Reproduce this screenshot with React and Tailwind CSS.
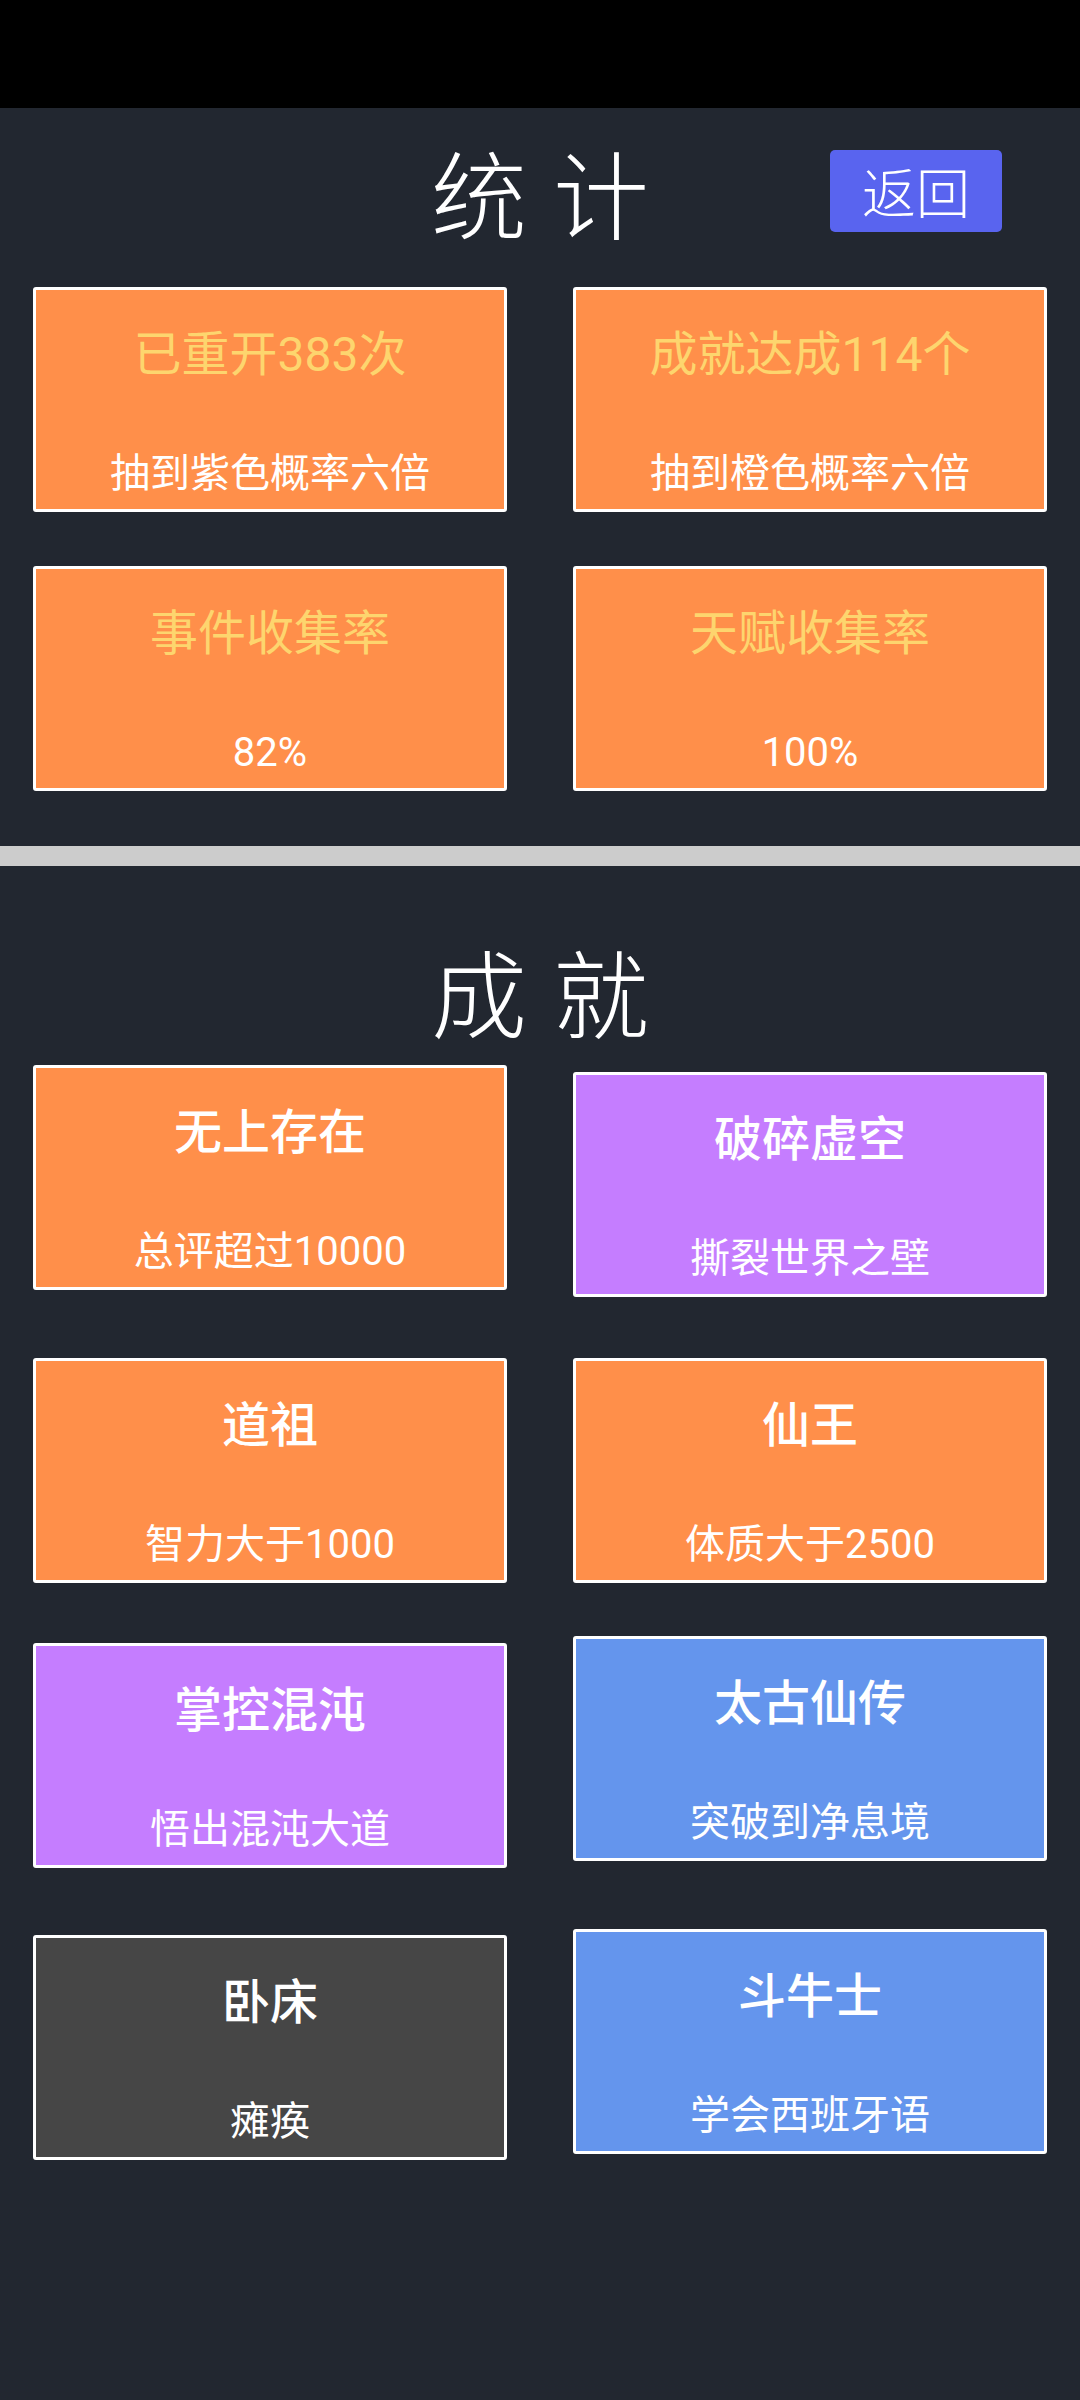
const stats = [
  { title: "已重开383次", sub: "抽到紫色概率六倍" },
  { title: "成就达成114个", sub: "抽到橙色概率六倍" },
  { title: "事件收集率", sub: "82%" },
  { title: "天赋收集率", sub: "100%" },
];

// rows of achievements; shift = small vertical offset of a card inside its row
const achievementRows = [
  {
    gap: "mt-0",
    items: [
      { title: "无上存在", sub: "总评超过10000", bg: "bg-[#ff8f4a]", shift: "mt-0" },
      { title: "破碎虚空", sub: "撕裂世界之壁", bg: "bg-[#c57dff]", shift: "mt-[7px]" },
    ],
  },
  {
    gap: "mt-[61px]",
    items: [
      { title: "道祖", sub: "智力大于1000", bg: "bg-[#ff8f4a]", shift: "mt-0" },
      { title: "仙王", sub: "体质大于2500", bg: "bg-[#ff8f4a]", shift: "mt-0" },
    ],
  },
  {
    gap: "mt-[53px]",
    items: [
      { title: "掌控混沌", sub: "悟出混沌大道", bg: "bg-[#c57dff]", shift: "mt-[7px]" },
      { title: "太古仙传", sub: "突破到净息境", bg: "bg-[#6495ed]", shift: "mt-0" },
    ],
  },
  {
    gap: "mt-[61px]",
    items: [
      { title: "卧床", sub: "瘫痪", bg: "bg-[#464646]", shift: "mt-[6px]" },
      { title: "斗牛士", sub: "学会西班牙语", bg: "bg-[#6495ed]", shift: "mt-0" },
    ],
  },
];

function Card({ title, sub, bg = "bg-[#ff8f4a]", titleClass = "font-medium text-white", className = "" }) {
  return (
    <div
      className={`flex h-[225px] w-full flex-col items-center justify-between rounded-[3px] border-[3px] border-white pt-[41px] pb-[15px] ${bg} ${className}`}
    >
      <div className={`text-[48px] leading-none ${titleClass}`}>{title}</div>
      <div className="text-[40px] leading-none text-white">{sub}</div>
    </div>
  );
}

export default function App() {
  return (
    <div
      className="min-h-[2400px] w-[1080px] bg-[#222730]"
      style={{ fontFamily: 'Roboto, "Noto Sans CJK SC", sans-serif' }}
    >
      {/* status bar */}
      <div className="h-[108px] bg-black" />

      {/* 统计 */}
      <div className="grid grid-cols-3 items-center pt-[35px]">
        <div />
        <h1 className="flex justify-center pl-[26px] font-['Noto_Sans_CJK_SC',sans-serif] text-[96px] font-light leading-none tracking-[26px] text-white">
          统计
        </h1>
        <div className="flex justify-end pr-[78px]">
          <button className="flex h-[82px] w-[172px] items-center justify-center rounded-[5px] bg-[#5964ef] font-['Noto_Sans_CJK_SC',sans-serif] text-[54px] font-light leading-none text-white">
            返回
          </button>
        </div>
      </div>

      <div className="mt-[48px] grid grid-cols-2 gap-x-[66px] gap-y-[54px] px-[33px]">
        {stats.map((s) => (
          <Card key={s.title} title={s.title} sub={s.sub} titleClass="font-normal text-[#fdd56e]" />
        ))}
      </div>

      <div className="mt-[55px] h-[20px] bg-[#cccccc]" />

      {/* 成就 */}
      <h1 className="mt-[76px] flex justify-center pl-[26px] font-['Noto_Sans_CJK_SC',sans-serif] text-[96px] font-light leading-none tracking-[26px] text-white">
        成就
      </h1>

      <div className="mt-[27px] px-[33px] pb-[200px]">
        {achievementRows.map((row, i) => (
          <div key={i} className={`flex items-start gap-[66px] ${row.gap}`}>
            {row.items.map((a) => (
              <Card key={a.title} title={a.title} sub={a.sub} bg={a.bg} className={a.shift} />
            ))}
          </div>
        ))}
      </div>
    </div>
  );
}
